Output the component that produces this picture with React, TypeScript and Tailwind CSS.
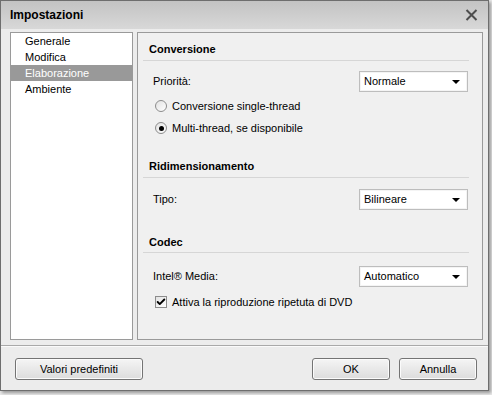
import { Check } from 'lucide-react';

const font = { fontFamily: '"Liberation Sans", Arial, sans-serif' };

function Dropdown({ value }: { value: string }) {
  return (
    <div className="flex h-[21px] w-[109px] items-center justify-between border border-[#bdbdbd] bg-white pl-[4px] pr-[7px] shadow-[inset_0_0_0_1px_#f4f4f4]">
      <span>{value}</span>
      {/* small down arrow */}
      <svg width="8" height="4" viewBox="0 0 8 4">
        <path d="M0 0 H8 L4 4 Z" fill="#000" />
      </svg>
    </div>
  );
}

function Section({ title }: { title: string }) {
  return <div className="h-[14px] pl-[11px] text-[11px] font-bold leading-[14px]">{title}</div>;
}

function Rule({ top }: { top: string }) {
  return <div className={`${top} ml-[5px] mr-[13px] h-px bg-[#d6d6d6]`}></div>;
}

function Radio({ checked, label }: { checked?: boolean; label: string }) {
  return (
    <div className="flex h-[22px] items-center pl-[17px]">
      <span className="flex h-[12px] w-[12px] items-center justify-center rounded-full border border-[#8c8c8c] bg-gradient-to-br from-[#e2e2e2] to-white">
        {checked && <span className="h-[5px] w-[5px] rounded-full bg-black"></span>}
      </span>
      <span className="ml-[5px]">{label}</span>
    </div>
  );
}

function Button({ label, w }: { label: string; w: string }) {
  return (
    <div
      className={`${w} flex h-[22px] items-center justify-center rounded-[3px] border border-[#747474] bg-gradient-to-b from-[#f5f5f5] to-[#dcdcdc] shadow-[inset_0_0_0_1px_#fbfbfb]`}
    >
      {label}
    </div>
  );
}

export default function App() {
  const items = ['Generale', 'Modifica', 'Elaborazione', 'Ambiente'];

  return (
    <div className="h-[395px] w-[492px] bg-[#e9e9e9] text-[11px] text-black" style={font}>
      <div className="flex h-[391px] w-[489px] flex-col border border-[#6e6e6e] bg-[#ececec] shadow-[2px_2px_3px_rgba(0,0,0,0.35)]">
        {/* Title bar */}
        <div className="flex h-[28px] items-center justify-between bg-gradient-to-b from-[#c3c3c3] to-[#d8d8d8] pl-[9px] pr-[10px]">
          <span className="text-[12px] font-bold">Impostazioni</span>
          <svg width="13" height="12" viewBox="0 0 13 12">
            <path d="M1.5 1 L11.5 11 M11.5 1 L1.5 11" stroke="#4d4d4d" strokeWidth="2" />
          </svg>
        </div>

        {/* Panels */}
        <div className="mt-[3px] flex h-[308px] gap-[4px] pl-[9px] pr-[5px]">
          {/* Category list */}
          <div className="w-[123px] border border-[#9a9a9a] bg-white">
            {items.map((item) => (
              <div
                key={item}
                className={`h-[16px] pl-[14px] leading-[16px] ${
                  item === 'Elaborazione' ? 'bg-[#999999] text-white' : ''
                }`}
              >
                {item}
              </div>
            ))}
          </div>

          {/* Settings */}
          <div className="w-[346px] border border-[#9a9a9a] bg-[#f0f0f0] pt-[9px]">
            <Section title="Conversione" />
            <Rule top="mt-[4px]" />
            <div className="mt-[10px] flex h-[21px] items-center justify-between pl-[15px] pr-[14px]">
              <span>Priorità:</span>
              <Dropdown value="Normale" />
            </div>
            <div className="mt-[3px]">
              <Radio label="Conversione single-thread" />
              <Radio checked label="Multi-thread, se disponibile" />
            </div>

            <div className="mt-[20px]">
              <Section title="Ridimensionamento" />
            </div>
            <Rule top="mt-[4px]" />
            <div className="mt-[11px] flex h-[21px] items-center justify-between pl-[15px] pr-[14px]">
              <span>Tipo:</span>
              <Dropdown value="Bilineare" />
            </div>

            <div className="mt-[25px]">
              <Section title="Codec" />
            </div>
            <Rule top="mt-[3px]" />
            <div className="mt-[13px] flex h-[21px] items-center justify-between pl-[15px] pr-[14px]">
              <span>Intel® Media:</span>
              <Dropdown value="Automatico" />
            </div>
            <div className="mt-[4px] flex h-[22px] items-center pl-[17px]">
              <span className="flex h-[12px] w-[12px] items-center justify-center border border-[#8c8c8c] bg-gradient-to-br from-[#e2e2e2] to-white">
                <Check size={10} strokeWidth={4.5} color="#000" />
              </span>
              <span className="ml-[5px]">Attiva la riproduzione ripetuta di DVD</span>
            </div>
          </div>
        </div>

        {/* Separator */}
        <div className="mt-[5px] h-px bg-[#a9a9a9]"></div>
        <div className="h-px bg-[#fafafa]"></div>

        {/* Buttons */}
        <div className="flex pl-[14px] pr-[11px] pt-[11px]">
          <Button label="Valori predefiniti" w="w-[128px]" />
          <div className="flex-1"></div>
          <Button label="OK" w="w-[78px]" />
          <div className="w-[9px]"></div>
          <Button label="Annulla" w="w-[78px]" />
        </div>
      </div>
    </div>
  );
}
